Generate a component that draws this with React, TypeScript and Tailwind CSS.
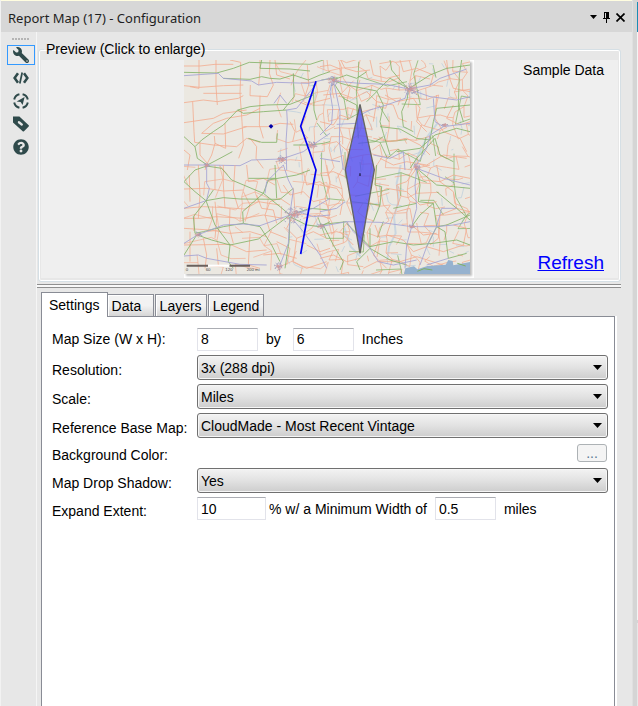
import type { ReactNode } from 'react';
import { FaQuestionCircle, FaWrench } from 'react-icons/fa';

const ORANGE = '#f3ab8f';
const GREEN = '#7fb063';
const VIOLET = '#a3a2d4';

interface Quadrant {
  x: number;
  y: number;
  orange: string;
  green: string;
  violet: string;
}

// Hand traced highways, one group per quarter of the map
const HIGHWAYS: Quadrant[] = [
  {
    x: -12,
    y: -15,
    orange:
      'M12 33H60L105 28H160M57 15V100L30 95M108 15V95L112 150M150 15L182 22V60L180 115M12 92L60 97L130 92L190 90M12 143L70 135L112 140L175 130L190 122M38 140L42 230L44 262M70 115H185M240 15V45L236 90M270 15L268 55L280 90L262 125L210 122L211 90M180 115L186 200L190 270L176 310M12 203L100 190L130 175L200 165M65 235L100 205L140 190L200 180L240 160M65 235L130 237L200 215M135 205L137 280L105 265L103 243M190 215H262L300 205L340 208M44 262L100 270L170 275L200 250L240 262M210 250L230 275L228 310L250 340M12 285L30 300L22 345M75 345L82 325L60 300V262M105 265L95 300L82 325M285 15L290 60L330 72M240 122L238 210L250 250M330 200L345 230L338 260M345 135L380 150L410 140L450 130M382 30L386 90L370 140',
    green:
      'M12 52L110 54L160 40L208 22L300 25L390 28L430 15M130 70L210 73L245 65L270 70L300 72L340 60L385 75L420 60L450 50M173 165L210 155L260 150L330 148L400 120M173 165L190 175L250 170L320 165M245 15L240 40L330 42L390 48M12 245L45 275L65 255L100 230L130 210L173 165M45 275L52 310L82 330M82 330L120 310L157 290M205 250L245 262L290 262L292 235M340 55L342 125L310 165M400 90L402 165L410 195M340 270L390 270L430 265L450 260',
    violet:
      'M12 62L115 55L130 70L215 78L235 90L290 82L385 85L450 70M320 165L322 200L318 260L320 345M282 145L300 120L320 145M320 165L350 160L390 110L410 85M82 330L180 332L215 315L305 312L370 290L395 272L450 235M12 330H82',
  },
  {
    x: 408,
    y: -15,
    orange:
      'M0 35L30 30L60 42L70 70L90 100L80 140M62 15L75 40L110 50L150 45M150 15L160 60L200 70L240 60M240 15L250 50L290 40L340 60L330 95M10 120L60 115L100 130L140 110L170 140L160 200M195 120L230 140L280 130L300 160L290 200L320 230M380 15L385 60L400 100L450 110M170 140L220 150L235 190L260 200M160 250L210 260L260 250L300 270L330 300M350 120L345 190L370 230L420 250L440 290M0 200L40 210L60 180L90 190L100 160M5 270L50 260L85 290L75 340M180 310L220 330L260 320L320 330L370 300L440 310M400 150L380 190L420 210L450 200',
    green:
      'M38 75L80 60L110 70L140 50M40 78L80 90L130 100L170 108L210 70L265 100M210 15L215 45L240 75L265 102M170 108L190 150L180 200L190 235L210 300M265 105L262 130L245 170L250 215L280 230M265 102L330 60L380 40L450 30M425 15L418 60L415 150L430 200M45 90L70 130L110 150L115 250M140 140L170 110M180 215L240 222L290 250L330 255L340 200L350 160L450 150M115 265L165 260L190 245M230 290L300 280L345 240L410 220L450 230M270 340L290 310L345 250L360 300L400 320',
    violet:
      'M38 70L30 110L38 160L35 205M40 75L60 170L58 260L70 345M40 78L120 85L200 88L265 102M265 102L330 90L360 70L440 42M265 102L255 130L200 150L150 165L120 180M265 102L330 125L410 135L450 125M340 130L345 200L370 215L450 205M370 215L330 240L320 280L290 330M35 205L0 240M50 208L110 205M160 300L210 310L250 290L255 345M0 310L60 320',
  },
  {
    x: -12,
    y: 315,
    orange:
      'M12 72L80 70L130 78L190 75M28 30L30 110M55 0L60 90L55 160M105 0V75M130 0V60L135 130M165 0L160 80L175 130M12 130L70 125L135 128L195 132L235 110L300 120M12 160H60L110 155L190 160L250 150L310 160M105 110L110 160L105 220M150 130L148 190L160 235M12 190L90 195L150 205L210 200L260 215M30 200V290M70 220L80 270L75 310M12 240L150 238L200 260L260 255M110 250L115 300M210 205L205 300L240 310M190 80L210 120L195 170M230 90L245 130L280 135L290 175M200 0L205 50L250 40L285 60M330 120L300 100L270 110L255 150L270 200L320 220M310 60L330 90L370 80L400 110L440 100M340 70L345 140L320 190L350 220L400 200L440 220M370 160L410 150L450 160M350 220L340 290L380 310L440 290M380 240L420 260L450 250M290 230L330 250L320 300M250 270L300 265L350 280M370 20L380 60L420 50L450 70',
    green:
      'M12 50L45 15L80 3L125 10L155 45L250 85L300 125L330 150M12 50L45 80L78 107L100 75M78 107L130 98L180 102L300 103L340 70M78 107L40 155L45 205L70 200L130 185L190 175L188 140L250 85M78 107L105 180L150 240M52 210L95 225L150 240L235 222L290 180L330 150M150 240L145 290L160 310M12 270L50 210M190 175L240 185L275 240L300 290M330 150L390 130L450 135M330 155L380 180L420 185L450 170M330 155L327 230L315 310M250 85L265 45L350 30L390 15M285 0L290 100M205 40H285',
    violet:
      'M80 0V55L88 70L80 105M310 0L325 45L340 75L330 145M78 107L12 130M12 235L52 210L130 180L190 177L240 182L330 150M12 273L55 270L80 280L180 298L260 300M330 155L325 235L300 300M330 150L400 130L450 100M255 85L260 50L310 0M340 165L370 200L420 270L440 310M355 140L400 155L450 150',
  },
  {
    x: 408,
    y: 315,
    orange:
      'M0 25L40 20L75 35M0 60L50 70L70 100L60 150M20 0L30 50L15 100L30 150M180 65L190 120L220 150L200 210M290 10L260 50L230 60L235 120M290 10L330 0M290 10L310 45L360 50L400 30L450 40M180 85L200 70L260 80L300 120L350 110M350 0L360 50L400 80L410 130L450 140M410 130L360 150L355 220L330 240M0 210L50 200L85 210M0 280L40 270L80 290L120 280M165 180L180 220L160 270L200 310M200 210L250 225L280 260L320 245M130 310L170 290L240 290L290 275L370 300M320 245L370 260L430 240L440 190L400 180M85 170L60 200L100 240M280 185L310 210L350 205M230 140L270 130L280 185',
    green:
      'M0 180L35 175L80 170M170 0L165 60L185 65L180 120L160 170M290 10L300 60L295 110L340 115L350 185L320 245M220 130L290 115M350 80L410 130L450 165M275 185L300 150L340 115M150 190L150 250L210 285L260 300M80 175L150 245L220 230L280 240L340 235L410 225L450 240M150 250L110 290L120 315M10 180L40 240L70 290L60 315M350 185L380 180L450 150M385 280L440 265M385 280L375 200L350 185M290 10L350 60L450 70M95 110L180 120',
    violet:
      'M0 185L80 170L180 172L275 185L350 185L400 180L450 170M275 185L290 130L285 60L290 10M275 185L260 240L255 310M290 10L370 40L450 60M80 170L100 200L150 250L175 290L220 300L290 285M350 185L320 245L300 300M350 185L365 130L410 130M0 140L50 130L75 110M385 280L320 300',
  },
];

const CITIES = [
  { x: 680, y: 88, r: 26 },
  { x: 448, y: 62, r: 20 },
  { x: 328, y: 466, r: 36 },
  { x: 384, y: 256, r: 16 },
  { x: 294, y: 298, r: 16 },
  { x: 698, y: 322, r: 13 },
  { x: 68, y: 316, r: 9 },
  { x: 42, y: 525, r: 9 },
  { x: 684, y: 500, r: 9 },
  { x: 410, y: 498, r: 12 },
  { x: 284, y: 620, r: 15 },
  { x: 782, y: 194, r: 8 },
];

function makeRandom(seed: number) {
  let value = seed;
  return () => {
    value = (value * 16807) % 2147483647;
    return value / 2147483647;
  };
}

// County roads: a jittered lattice with some of its links left out
function localRoads(seed: number, x0: number, x1: number, y0: number, y1: number, step: number, keep: number) {
  const random = makeRandom(seed);
  const cols = Math.ceil((x1 - x0) / step) + 1;
  const rows = Math.ceil((y1 - y0) / step) + 1;
  const nodes = Array.from({ length: rows }, (_, r) =>
    Array.from({ length: cols }, (_, c) => [
      Math.round(x0 + c * step + (random() - 0.5) * step * 0.8),
      Math.round(y0 + r * step + (random() - 0.5) * step * 0.8),
    ]),
  );
  let d = '';
  for (let r = 0; r < rows; r++) {
    for (let c = 0; c < cols; c++) {
      const [x, y] = nodes[r][c];
      if (c + 1 < cols && random() < keep) d += `M${x} ${y}L${nodes[r][c + 1].join(' ')}`;
      if (r + 1 < rows && random() < keep) d += `M${x} ${y}L${nodes[r + 1][c].join(' ')}`;
    }
  }
  return d;
}

// Short street stubs scattered round a city centre
function cityStreets(seed: number, x: number, y: number, radius: number) {
  const random = makeRandom(seed * 7919);
  let d = '';
  for (let i = 0; i < radius * 2; i++) {
    const angle = random() * Math.PI * 2;
    const dist = random() * radius;
    const px = Math.round(x + Math.cos(angle) * dist);
    const py = Math.round(y + Math.sin(angle) * dist * 0.7);
    d += `M${px} ${py}l${Math.round((random() - 0.5) * 14)} ${Math.round((random() - 0.5) * 10)}`;
  }
  return d;
}

const LOCAL_EAST = localRoads(77, 440, 870, 0, 645, 29, 0.5);
const LOCAL_WEST = localRoads(31, 0, 440, 330, 645, 36, 0.4);
const LOCAL_NORTH = localRoads(15, 290, 440, 0, 330, 34, 0.42);
const LOCAL_GREEN = localRoads(53, 420, 870, 0, 645, 58, 0.28);
const CREEKS = localRoads(91, 290, 860, 10, 640, 21, 0.07);

function MapImage() {
  return (
    <svg className="block h-[214px] w-[286px]" viewBox="0 0 858 642" role="img" aria-label="Map preview">
      <rect width="858" height="642" fill="#ebe8e1" />
      <g fill="none" strokeWidth="3" strokeLinejoin="round">
        <path d={CREEKS} stroke="#b9cddd" opacity=".7" />
        <path d="M650 315L638 370L645 420L630 470L635 520L615 560L610 600M760 190L730 230L700 290L690 320M480 500L500 560L530 590" stroke="#bccfdf" strokeWidth="6" opacity=".7" />
        <path d={LOCAL_EAST} stroke={ORANGE} opacity=".72" />
        <path d={LOCAL_WEST} stroke={ORANGE} opacity=".65" />
        <path d={LOCAL_NORTH} stroke={ORANGE} opacity=".65" />
        <path d={LOCAL_GREEN} stroke={GREEN} opacity=".7" />
        {HIGHWAYS.map((q) => (
          <g key={`${q.x},${q.y}`} transform={`translate(${q.x} ${q.y})`}>
            <path d={q.orange} stroke={ORANGE} opacity=".8" />
            <path d={q.green} stroke={GREEN} opacity=".8" />
            <path d={q.violet} stroke={VIOLET} opacity=".85" />
          </g>
        ))}
        {CITIES.map((city, i) => (
          <g key={i}>
            <path d={cityStreets(i * 7 + 11, city.x, city.y, city.r)} stroke="#9a98bc" opacity=".7" />
            <path d={cityStreets(i * 5 + 301, city.x, city.y, city.r * 0.7)} stroke="#d99a96" opacity=".6" />
          </g>
        ))}
      </g>
      <path d="M660 642L664 625L690 619L700 628L730 618L785 614L793 600L806 603L808 616L858 606V642Z" fill="#96b2cf" />
      <path d="M700 634L720 626L745 630M820 610L845 618" stroke={GREEN} strokeWidth="3" fill="none" />

      <path d="M396 64L350 199L396 330L350 582" fill="none" stroke="#0000f0" strokeWidth="5" />
      <path d="M261 192L268 199L261 206L254 199Z" fill="#0000a8" />
      <path d="M528 133L571 329L528 580L484 329Z" fill="#4f4cf2" fillOpacity=".78" stroke="#666660" strokeWidth="4" />
      <path d="M528 340v8" stroke="#20204a" strokeWidth="4" />

      <path d="M8 614h64v6h-64zM136 614h62v6h-62z" fill="#6b615d" />
      <path d="M72 614h64v6h-64z" fill="#ffffff" />
      <g fill="#4a4a4a" fontSize="13" fontFamily="Liberation Sans, sans-serif">
        <text x="5" y="634">0</text>
        <text x="65" y="634">60</text>
        <text x="124" y="634">120</text>
        <text x="188" y="634">200 mi</text>
      </g>
    </svg>
  );
}

function CodeIcon() {
  return (
    <svg className="h-4 w-4" viewBox="0 0 16 16" fill="none" stroke="currentColor" strokeWidth="2.5">
      <path d="M5 3.2L1.6 8L5 12.8M11 3.2L14.4 8L11 12.8" />
      <path d="M9.2 2.5L6.8 13.5" strokeWidth="1.7" />
    </svg>
  );
}

function CompassIcon() {
  return (
    <svg className="h-4 w-4" viewBox="0 0 16 16" fill="none" stroke="currentColor" strokeWidth="2">
      <path d="M9.6 1.2A7 7 0 0 1 14.8 6.4M14.8 9.6A7 7 0 0 1 9.6 14.8M6.4 14.8A7 7 0 0 1 1.2 9.6M1.2 6.4A7 7 0 0 1 6.4 1.2" />
      <path d="M11.6 4L9.6 12L7.6 9L3.6 8.6Z" fill="currentColor" stroke="none" />
    </svg>
  );
}

function TagIcon() {
  return (
    <svg className="h-4 w-4" viewBox="0 0 16 16" fill="currentColor">
      <path
        fillRule="evenodd"
        d="M0 0.6H6.4L15.7 9.2Q16.2 9.8 15.7 10.4L11 15.2Q10.3 15.7 9.7 15.2L0 6.6ZM5.2 5.2Q4.4 6.3 5.2 7.2L8 9.4Q9 10 9.7 9.3Q10.3 8.6 9.6 7.8L7 5.4Q6 4.6 5.2 5.2Z"
      />
    </svg>
  );
}

function SideButton({ label, active, children }: { label: string; active?: boolean; children: ReactNode }) {
  return (
    <button
      type="button"
      aria-label={label}
      className={`flex h-5 w-7 items-center justify-center border ${active ? 'border-[#3399ff] bg-[#eaeaea]' : 'border-transparent'}`}
    >
      {children}
    </button>
  );
}

function Tab({ label, active }: { label: string; active?: boolean }) {
  return (
    <button
      type="button"
      role="tab"
      aria-selected={!!active}
      className={
        active
          ? '-mb-px h-[25px] border border-b-0 border-[#898c95] bg-white px-[7px] pb-px text-sm'
          : 'h-[22px] min-w-[46px] border border-b-0 border-[#898c95] bg-linear-to-b from-[#f2f2f2] from-50% to-[#d6d6d6] px-1 text-left text-sm shadow-[inset_1px_1px_0_#fff] not-nth-2:ml-px nth-2:border-l-0'
      }
    >
      {label}
    </button>
  );
}

function FieldLabel({ id, children }: { id: string; children: ReactNode }) {
  return (
    <label htmlFor={id} className="pt-1 leading-[18px] whitespace-nowrap">
      {children}
    </label>
  );
}

function Select({ id, options }: { id: string; options: string[] }) {
  return (
    <div className="relative">
      <select
        id={id}
        className="block h-[25px] w-full appearance-none rounded-[3px] border border-[#707070] bg-linear-to-b from-[#f3f3f3] via-[#e2e2e2] via-50% to-[#cdcdcd] pr-6 pl-[3px] shadow-[inset_0_0_0_1px_#f6f6f6]"
      >
        {options.map((option) => (
          <option key={option}>{option}</option>
        ))}
      </select>
      <svg className="pointer-events-none absolute top-2.5 right-1.5 h-[5px] w-[9px]" viewBox="0 0 9 5">
        <path d="M0 0H9L4.5 5Z" />
      </svg>
    </div>
  );
}

function TextBox({ id, value, label, wide }: { id: string; value: string; label?: string; wide?: boolean }) {
  return (
    <input
      id={id}
      type="text"
      defaultValue={value}
      aria-label={label}
      className={`h-[23px] border border-[#e2e3ea] border-t-[#abadb3] bg-white px-[3px] ${wide ? 'w-[69px]' : 'w-[61px]'}`}
    />
  );
}

function TitleBar() {
  return (
    <header className="flex h-8 items-center justify-between border-t border-[#fffde0] bg-[#d7d7d7] pr-[7px] pl-[7px]">
      <h1 className="pt-0.5 font-['Noto_Sans',sans-serif] text-[13px]/5 text-[#1e1e1e]">Report Map (17) - Configuration</h1>
      <div className="flex items-center gap-1.5 pt-px">
        <button type="button" aria-label="Window options">
          <svg className="h-1 w-[7px]" viewBox="0 0 7 4">
            <path d="M0 0H7L3.5 4Z" />
          </svg>
        </button>
        <button type="button" aria-label="Pin">
          <svg className="h-[11px] w-[7px]" viewBox="0 0 7 11">
            <path d="M1 0H6V6H7V7H4V11H3V7H0V6H1ZM2 1V6H3V1Z" fillRule="evenodd" />
          </svg>
        </button>
        <button type="button" aria-label="Close">
          <svg className="h-[9px] w-[9px]" viewBox="0 0 9 9" stroke="black" strokeWidth="1.7">
            <path d="M0.5 0.5L8.5 8.5M8.5 0.5L0.5 8.5" />
          </svg>
        </button>
      </div>
    </header>
  );
}

function Preview() {
  return (
    <fieldset className="ml-px rounded-[3px] border border-[#d5dfe5] px-0.5 pt-px pb-[3px] shadow-[inset_0_0_0_1px_#fff]">
      <legend className="ml-[3px] px-0.5 text-sm/5">Preview (Click to enlarge)</legend>
      <div className="flex justify-between bg-[#efefef]">
        <div className="flex flex-1 justify-end">
          <button type="button" aria-label="Enlarge preview" className="bg-white pr-1 pb-1">
            <div className="shadow-[2px_2px_2px_#bdbdbd]">
              <MapImage />
            </div>
          </button>
        </div>
        <div className="flex w-[144px] flex-col items-end justify-between pr-3.5 pb-px">
          <span className="text-sm/5">Sample Data</span>
          <a href="#refresh" className="text-[19px]/7 text-[#0000ff] underline">
            Refresh
          </a>
        </div>
      </div>
    </fieldset>
  );
}

function Settings() {
  return (
    <div className="grid grid-cols-[145px_1fr] items-center gap-y-1 pt-2.5 pr-1.5 pl-2.5 text-sm/5">
      <label htmlFor="map-width">Map Size (W x H):</label>
      <div className="flex h-6 items-center gap-2">
        <TextBox id="map-width" value="8" />
        <span className="mr-1">by</span>
        <TextBox id="map-height" value="6" label="Map height" />
        <span>Inches</span>
      </div>

      <FieldLabel id="resolution">Resolution:</FieldLabel>
      <Select id="resolution" options={['3x (288 dpi)', '2x (192 dpi)', '1x (96 dpi)']} />

      <FieldLabel id="scale">Scale:</FieldLabel>
      <Select id="scale" options={['Miles', 'Kilometers']} />

      <FieldLabel id="base-map">Reference Base Map:</FieldLabel>
      <Select id="base-map" options={['CloudMade - Most Recent Vintage', 'None']} />

      <FieldLabel id="background">Background Color:</FieldLabel>
      <div className="flex h-[22px] items-center justify-end pr-px">
        <button
          id="background"
          type="button"
          className="h-[18px] w-[30px] rounded-[3px] border border-[#adb2b5] bg-[#f4f4f4] text-sm/4 text-[#5a7896]"
        >
          ...
        </button>
      </div>

      <FieldLabel id="shadow">Map Drop Shadow:</FieldLabel>
      <Select id="shadow" options={['Yes', 'No']} />

      <FieldLabel id="expand">Expand Extent:</FieldLabel>
      <div className="flex items-center whitespace-nowrap">
        <TextBox id="expand" value="10" wide />
        <label htmlFor="min-width" className="mr-2 ml-[3px]">
          % w/ a Minimum Width of
        </label>
        <TextBox id="min-width" value="0.5" />
        <span className="ml-2">miles</span>
      </div>
    </div>
  );
}

export default function App() {
  return (
    <div className="flex min-h-screen bg-[#e7e7e7] font-['Liberation_Sans',Arial,sans-serif] text-black">
      <div className="flex min-w-0 flex-1 flex-col border-l border-[#f2f2f2]">
        <TitleBar />
        <div className="flex flex-1">
          <nav className="flex w-9 flex-col items-center gap-[3px] border-r border-[#f5f5f5] pt-1.5 pl-1 text-[#2f4a4b]">
            <div className="flex h-1 w-[18px] justify-between">
              {[0, 1, 2, 3, 4, 5].map((dot) => (
                <span key={dot} className="h-0.5 w-0.5 bg-[#b4b4b4]" />
              ))}
            </div>
            <SideButton label="Configuration" active>
              <FaWrench className="h-4 w-4 -scale-x-100" />
            </SideButton>
            <SideButton label="XML view">
              <CodeIcon />
            </SideButton>
            <SideButton label="Navigation">
              <CompassIcon />
            </SideButton>
            <SideButton label="Annotation">
              <TagIcon />
            </SideButton>
            <SideButton label="Help">
              <FaQuestionCircle className="h-4 w-4" />
            </SideButton>
          </nav>

          <main className="flex min-w-0 flex-1 flex-col pt-[7px] pr-[11px]">
            <Preview />
            <div className="mt-0.5 h-1 border-y border-[#8f8f8f] bg-[#f8f8f8]" />
            <section className="flex flex-1 flex-col pt-1 pr-1.5 pl-1">
              <div role="tablist" className="relative flex items-end">
                <Tab label="Settings" active />
                <Tab label="Data" />
                <Tab label="Layers" />
                <Tab label="Legend" />
              </div>
              <div className="flex-1 border border-b-0 border-[#898c95] bg-white shadow-[2px_0_0_#fff]">
                <Settings />
              </div>
            </section>
          </main>
        </div>
      </div>

      <aside className="flex w-1.5 flex-col border-l border-[#e0e0e0] bg-[#d5d5d5] pl-1">
        <div className="mt-0.5 h-[30px] bg-[#1c8cb4]" />
        <div className="h-[588px] bg-[#f4f4f4]" />
        <div className="mt-[3px] flex-1 bg-[#e7e7e7]" />
      </aside>
    </div>
  );
}
